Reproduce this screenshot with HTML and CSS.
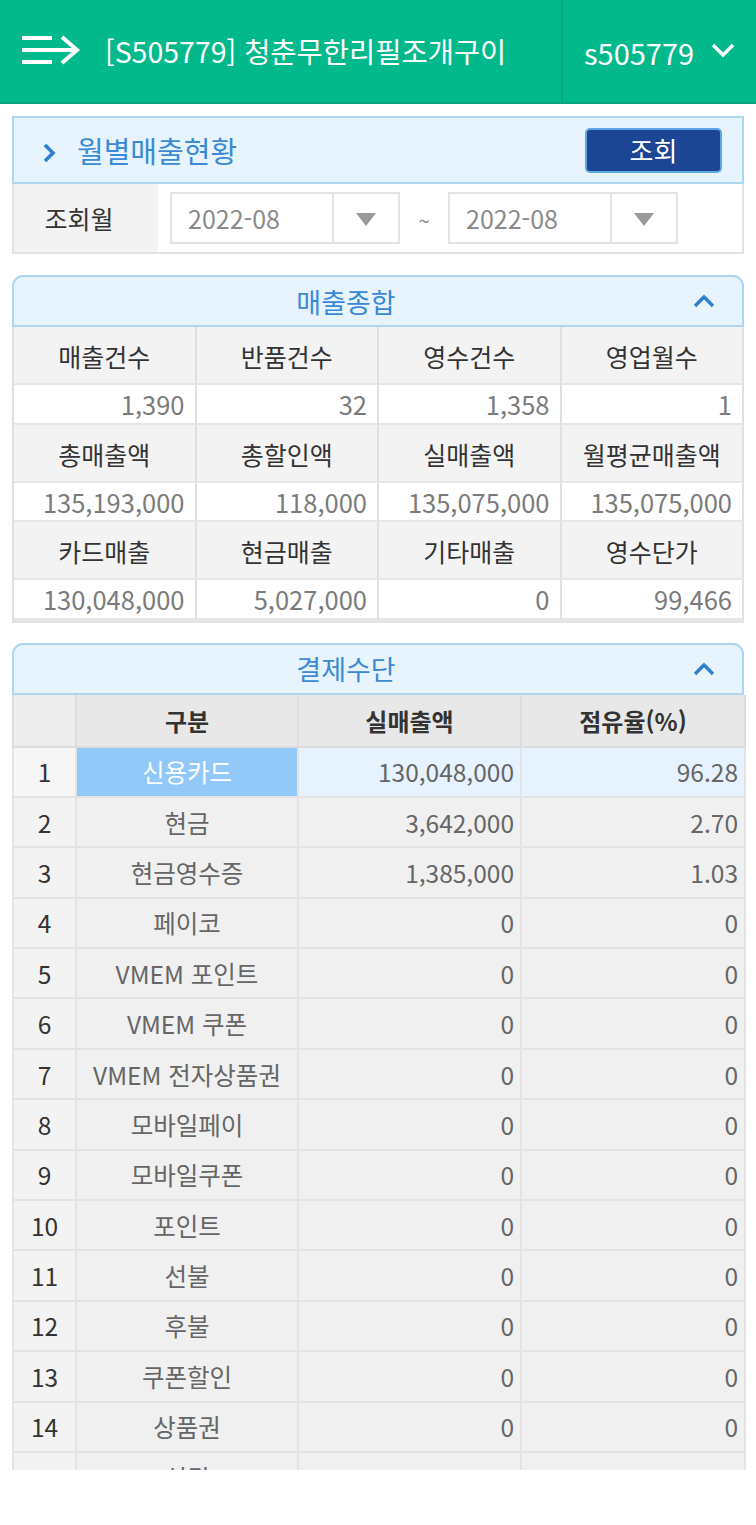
FILE: index.html
```html
<!DOCTYPE html>
<html lang="ko">
<head>
<meta charset="utf-8">
<title>월별매출현황</title>
<link rel="stylesheet" href="styles.css">
</head>
<body>
<header class="topbar">
  <div class="topbar-left">
    <svg class="menu-icon" width="62" height="30" viewBox="0 0 62 30">
      <g stroke="#fff" stroke-width="4" fill="none" stroke-linecap="butt">
        <line x1="2" y1="3" x2="32" y2="3"/>
        <line x1="2" y1="15" x2="54" y2="15"/>
        <line x1="2" y1="27" x2="32" y2="27"/>
        <polyline points="42,2 57,15 42,28" stroke-linejoin="miter"/>
      </g>
    </svg>
    <span class="store-title">[S505779] 청춘무한리필조개구이</span>
  </div>
  <div class="topbar-right">
    <span class="user-id">s505779</span>
    <svg class="down-icon" width="26" height="18" viewBox="0 0 26 18">
      <polyline points="3,4 13,14 23,4" fill="none" stroke="#fff" stroke-width="3.4"/>
    </svg>
  </div>
</header>

<main class="content">
  <section class="panel search-panel">
    <div class="search-head">
      <svg class="right-icon" width="16" height="24" viewBox="0 0 16 24">
        <polyline points="4,4 12,12 4,20" fill="none" stroke="#2f7fd0" stroke-width="3.6"/>
      </svg>
      <h2 class="search-title">월별매출현황</h2>
      <button class="btn-search">조회</button>
    </div>
    <div class="search-row">
      <div class="search-label">조회월</div>
      <div class="search-fields">
        <div class="select">
          <span class="select-text">2022-08</span>
          <span class="select-arrow"><i class="tri"></i></span>
        </div>
        <span class="tilde">~</span>
        <div class="select">
          <span class="select-text">2022-08</span>
          <span class="select-arrow"><i class="tri"></i></span>
        </div>
      </div>
    </div>
  </section>

  <section class="panel summary-panel">
    <div class="fold-head">
      <h2 class="fold-title">매출종합</h2>
      <svg class="up-icon" width="24" height="16" viewBox="0 0 24 16">
        <polyline points="3,13 12,4 21,13" fill="none" stroke="#2f7fd0" stroke-width="3.4"/>
      </svg>
    </div>
    <div class="summary-grid">
      <div class="lbl">매출건수</div><div class="lbl">반품건수</div><div class="lbl">영수건수</div><div class="lbl">영업월수</div>
      <div class="val">1,390</div><div class="val">32</div><div class="val">1,358</div><div class="val">1</div>
      <div class="lbl">총매출액</div><div class="lbl">총할인액</div><div class="lbl">실매출액</div><div class="lbl">월평균매출액</div>
      <div class="val">135,193,000</div><div class="val">118,000</div><div class="val">135,075,000</div><div class="val">135,075,000</div>
      <div class="lbl">카드매출</div><div class="lbl">현금매출</div><div class="lbl">기타매출</div><div class="lbl">영수단가</div>
      <div class="val">130,048,000</div><div class="val">5,027,000</div><div class="val">0</div><div class="val">99,466</div>
    </div>
  </section>

  <section class="panel pay-panel">
    <div class="fold-head">
      <h2 class="fold-title">결제수단</h2>
      <svg class="up-icon" width="24" height="16" viewBox="0 0 24 16">
        <polyline points="3,13 12,4 21,13" fill="none" stroke="#2f7fd0" stroke-width="3.4"/>
      </svg>
    </div>
    <table class="pay-table">
      <colgroup>
        <col class="c-no"><col class="c-name"><col class="c-amt"><col class="c-rate">
      </colgroup>
      <thead>
        <tr><th></th><th>구분</th><th>실매출액</th><th>점유율(%)</th></tr>
      </thead>
      <tbody>
        <tr class="sel"><td class="no">1</td><td class="name">신용카드</td><td class="num">130,048,000</td><td class="num">96.28</td></tr>
        <tr><td class="no">2</td><td class="name">현금</td><td class="num">3,642,000</td><td class="num">2.70</td></tr>
        <tr><td class="no">3</td><td class="name">현금영수증</td><td class="num">1,385,000</td><td class="num">1.03</td></tr>
        <tr><td class="no">4</td><td class="name">페이코</td><td class="num">0</td><td class="num">0</td></tr>
        <tr><td class="no">5</td><td class="name">VMEM 포인트</td><td class="num">0</td><td class="num">0</td></tr>
        <tr><td class="no">6</td><td class="name">VMEM 쿠폰</td><td class="num">0</td><td class="num">0</td></tr>
        <tr><td class="no">7</td><td class="name">VMEM 전자상품권</td><td class="num">0</td><td class="num">0</td></tr>
        <tr><td class="no">8</td><td class="name">모바일페이</td><td class="num">0</td><td class="num">0</td></tr>
        <tr><td class="no">9</td><td class="name">모바일쿠폰</td><td class="num">0</td><td class="num">0</td></tr>
        <tr><td class="no">10</td><td class="name">포인트</td><td class="num">0</td><td class="num">0</td></tr>
        <tr><td class="no">11</td><td class="name">선불</td><td class="num">0</td><td class="num">0</td></tr>
        <tr><td class="no">12</td><td class="name">후불</td><td class="num">0</td><td class="num">0</td></tr>
        <tr><td class="no">13</td><td class="name">쿠폰할인</td><td class="num">0</td><td class="num">0</td></tr>
        <tr><td class="no">14</td><td class="name">상품권</td><td class="num">0</td><td class="num">0</td></tr>
        <tr><td class="no">15</td><td class="name">식권</td><td class="num">0</td><td class="num">0</td></tr>
      </tbody>
    </table>
  </section>
</main>
</body>
</html>
```

FILE: styles.css
```css
* { box-sizing: border-box; }

html, body {
  margin: 0;
  padding: 0;
  background: #fff;
}

body {
  font-family: "Noto Sans CJK KR", "Noto Sans", sans-serif;
  color: #333;
  width: 756px;
}

/* top bar */
.topbar {
  height: 104px;
  background: #02b98b;
  border-bottom: 2px solid #0aa47c;
  display: flex;
  align-items: stretch;
}

.topbar-left {
  width: 563px;
  display: flex;
  align-items: center;
  padding-left: 20px;
  border-right: 2px solid #0aa87f;
}

.menu-icon {
  flex: none;
  margin-top: -2px;
}

.store-title {
  margin-left: 23px;
  color: #fff;
  font-size: 28.5px;
  white-space: nowrap;
  margin-top: -2px;
}

.topbar-right {
  flex: 1;
  display: flex;
  align-items: center;
  padding-left: 21px;
}

.user-id {
  color: #fff;
  font-size: 29px;
  margin-top: 2px;
}

.down-icon {
  margin-left: 16px;
  margin-top: -3px;
}

/* content */
.content {
  height: 1366px;
  overflow: hidden;
  padding: 12px 12px 0;
}

.panel h2 {
  margin: 0;
  font-weight: 400;
}

/* search panel */
.search-head {
  height: 68px;
  background: #e7f3fd;
  border: 2px solid #acd6f2;
  display: flex;
  align-items: center;
  padding-left: 27px;
  padding-right: 20px;
}

.right-icon { flex: none; margin-top: 6px; }

.search-title {
  font-size: 29px;
  color: #3a8ad6;
  margin-left: 20px !important;
  flex: 1;
}

.btn-search {
  width: 137px;
  height: 45px;
  background: #1c4594;
  border: 2px solid #5ea6e6;
  border-radius: 5px;
  color: #fff;
  font-family: inherit;
  font-size: 26px;
  padding: 0;
  line-height: 1;
}

.search-row {
  display: flex;
  height: 70px;
  border: 2px solid #e3e3e3;
  border-top: none;
}

.search-label {
  width: 144px;
  background: #f3f3f3;
  display: flex;
  align-items: center;
  justify-content: center;
  font-size: 25px;
  color: #333;
  padding-right: 14px;
}

.search-fields {
  flex: 1;
  display: flex;
  align-items: center;
  padding-left: 12px;
}

.select {
  width: 230px;
  height: 52px;
  border: 2px solid #e4e4e4;
  display: flex;
  background: #fff;
}

.select-text {
  flex: 1;
  display: flex;
  align-items: center;
  padding-left: 16px;
  font-size: 25px;
  color: #8a8a8a;
}

.select-arrow {
  width: 66px;
  border-left: 2px solid #e4e4e4;
  display: flex;
  align-items: center;
  justify-content: center;
}

.tri {
  width: 0;
  height: 0;
  border-left: 10px solid transparent;
  border-right: 10px solid transparent;
  border-top: 13px solid #9a9a9a;
  margin-top: 3px;
}

.tilde {
  width: 48px;
  text-align: center;
  color: #888;
  font-size: 20px;
  margin-top: 4px;
}

/* fold heads */
.fold-head {
  height: 52px;
  background: #e7f3fd;
  border: 2px solid #acd6f2;
  border-radius: 11px 11px 0 0;
  position: relative;
  display: flex;
  align-items: center;
  justify-content: center;
  padding-right: 64px;
}

.fold-title {
  font-size: 27px;
  color: #3a8ad6;
}

.up-icon {
  position: absolute;
  right: 26px;
  top: 16px;
}

.summary-panel { margin-top: 21px; }

.summary-grid {
  display: grid;
  grid-template-columns: repeat(4, 1fr);
  border-left: 2px solid #e0e0e0;
  border-bottom: 3px solid #e3e3e3;
}

.summary-grid > div {
  border-right: 2px solid #e0e0e0;
  border-bottom: 2px solid #e6e6e6;
  display: flex;
  align-items: center;
  white-space: nowrap;
}

.summary-grid .lbl {
  height: 58px;
  background: #f3f3f3;
  justify-content: center;
  color: #333;
  font-size: 25px;
  padding-top: 2px;
}

.summary-grid .val {
  height: 39.5px;
  background: #fff;
  justify-content: flex-end;
  padding-right: 10px;
  color: #7b7b7b;
  font-size: 25.5px;
}

/* payment table */
.pay-panel { margin-top: 20px; }

.pay-table {
  width: 732px;
  border-collapse: collapse;
  table-layout: fixed;
}

.c-no { width: 63px; }
.c-name { width: 222px; }
.c-amt { width: 223px; }
.c-rate { width: 224px; }

.pay-table th {
  height: 52px;
  background: #e8e8e8;
  border: 2px solid #dcdcdc;
  border-top: none;
  font-weight: 700;
  font-size: 24px;
  color: #333;
  padding: 0;
}

.pay-table th:first-child { background: #ededed; }

.pay-table td {
  height: 50.4px;
  background: #f0f0f0;
  border: 2px solid #e3e3e3;
  padding: 0;
  font-size: 24.5px;
  white-space: nowrap;
}

.pay-table td.no {
  text-align: center;
  color: #333;
  background: #f3f3f3;
  font-size: 24.5px;
}

.pay-table td.name {
  text-align: center;
  color: #666;
}

.pay-table td.num {
  text-align: right;
  padding-right: 6px;
  color: #666;
  font-size: 24.5px;
}

.pay-table tr.sel td { background: #e6f2fd; }
.pay-table tr.sel td.no { background: #f6f6f6; }
.pay-table tr.sel td.name { background: #93c9f8; color: #fff; }
```
